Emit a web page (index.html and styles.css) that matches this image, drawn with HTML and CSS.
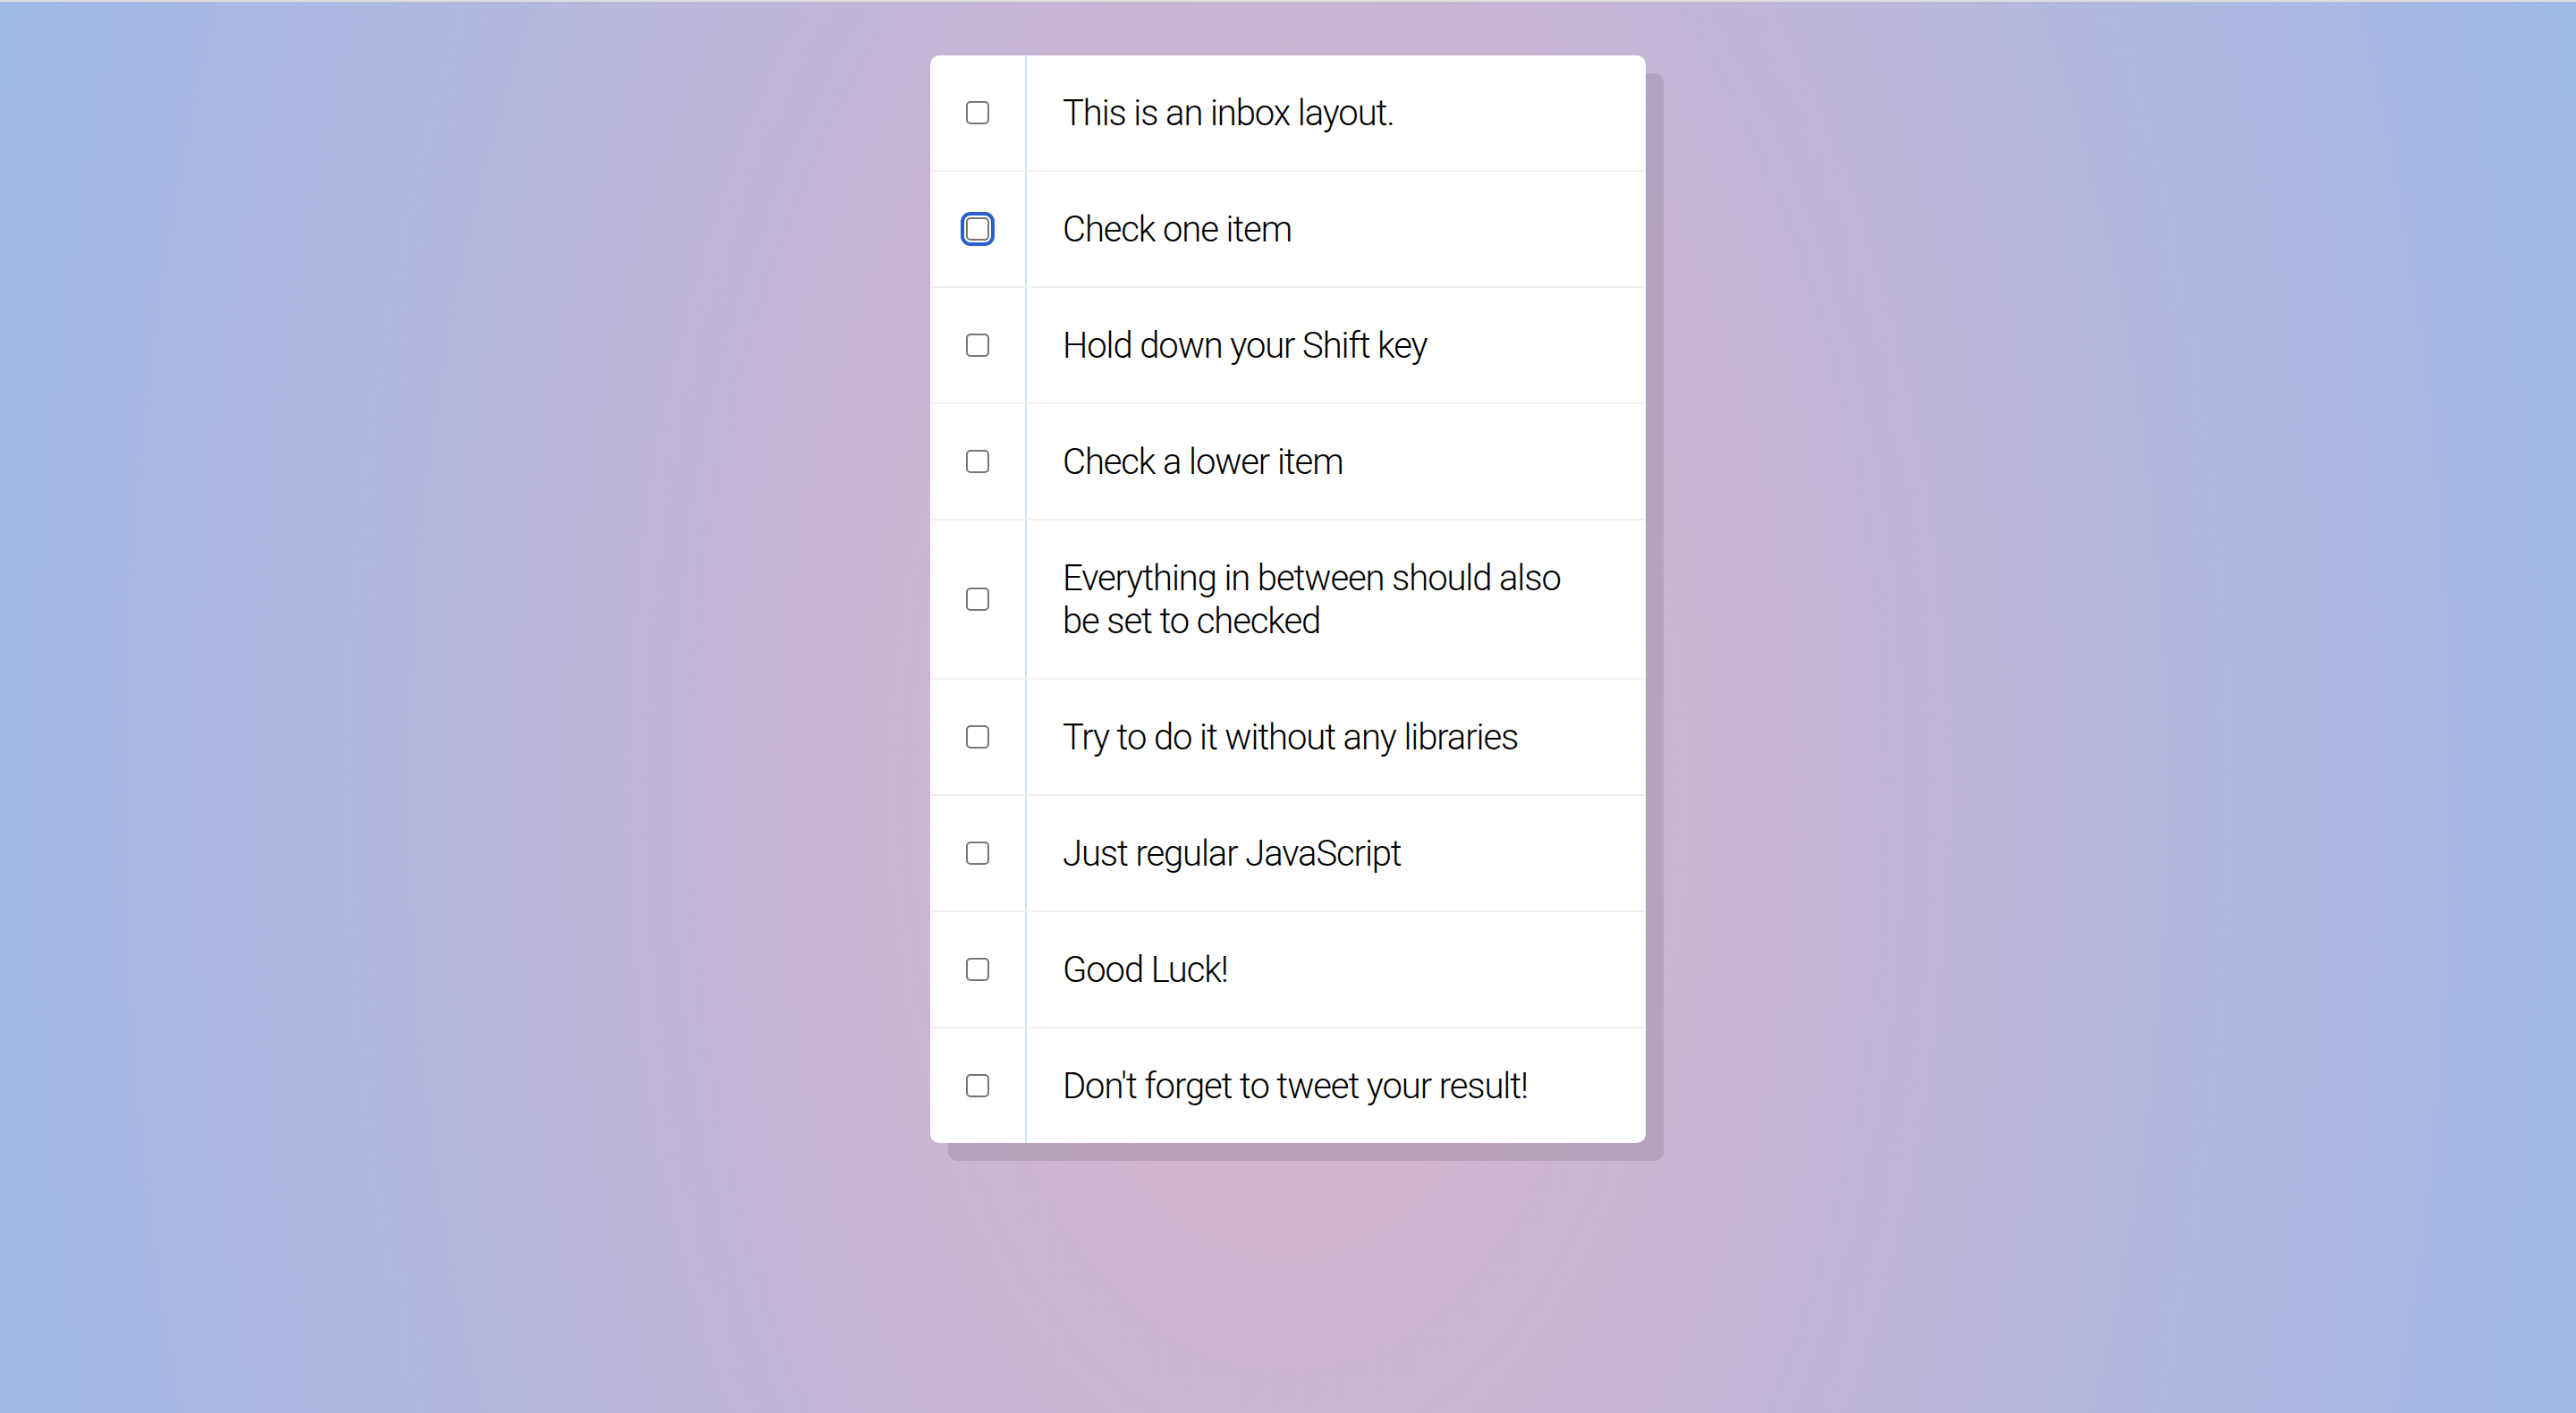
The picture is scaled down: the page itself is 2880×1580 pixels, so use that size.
FILE: index.html
```html
<!DOCTYPE html>
<html lang="en">
<head>
<meta charset="utf-8">
<title>Hold Shift to Check Multiple Checkboxes</title>
<link rel="stylesheet" href="styles.css">
</head>
<body>
<div class="page">
  <div class="inbox">
    <div class="item"><input type="checkbox" class="check"><p class="label">This is an inbox layout.</p></div>
    <div class="item"><input type="checkbox" class="check is-focused"><p class="label">Check one item</p></div>
    <div class="item"><input type="checkbox" class="check"><p class="label">Hold down your Shift key</p></div>
    <div class="item"><input type="checkbox" class="check"><p class="label">Check a lower item</p></div>
    <div class="item"><input type="checkbox" class="check"><p class="label">Everything in between should also be set to checked</p></div>
    <div class="item"><input type="checkbox" class="check"><p class="label">Try to do it without any libraries</p></div>
    <div class="item"><input type="checkbox" class="check"><p class="label">Just regular JavaScript</p></div>
    <div class="item"><input type="checkbox" class="check"><p class="label">Good Luck!</p></div>
    <div class="item"><input type="checkbox" class="check"><p class="label">Don't forget to tweet your result!</p></div>
  </div>
</div>
</body>
</html>
```

FILE: styles.css
```css
html, body {
  margin: 0;
  padding: 0;
}

.page {
  box-sizing: border-box;
  min-height: 1580px;
  border-top: 2px solid #dedede;
  padding-top: 60px;
  background: radial-gradient(ellipse 1500px 2600px at 50% 56%, #d2b3d1 18%, #9fbae5 100%);
}

.inbox {
  width: 800px;
  margin: 0 auto;
  background: #ffffff;
  border-radius: 10px;
  box-shadow: 20px 20px 0 rgba(0, 0, 0, 0.1);
}

.item {
  display: flex;
  align-items: center;
  border-bottom: 2px solid #f1f1f1;
}

.item:last-child {
  border-bottom: 0;
}

.check {
  appearance: none;
  -webkit-appearance: none;
  box-sizing: border-box;
  width: 26px;
  height: 26px;
  margin: 40px;
  border: 2px solid #767676;
  border-radius: 5px;
  background: #ffffff;
  flex: none;
}

.check.is-focused {
  outline: 4px solid #2a60c9;
  outline-offset: 2px;
}

.label {
  margin: 0;
  padding: 41px 48px 39px 40px;
  flex: 1;
  font-family: Roboto, "Liberation Sans", Arial, sans-serif;
  font-size: 40px;
  line-height: 48px;
  font-weight: 300;
  letter-spacing: -1.1px;
  color: #000000;
  border-left: 2px solid #d1e2ff;
}
```
